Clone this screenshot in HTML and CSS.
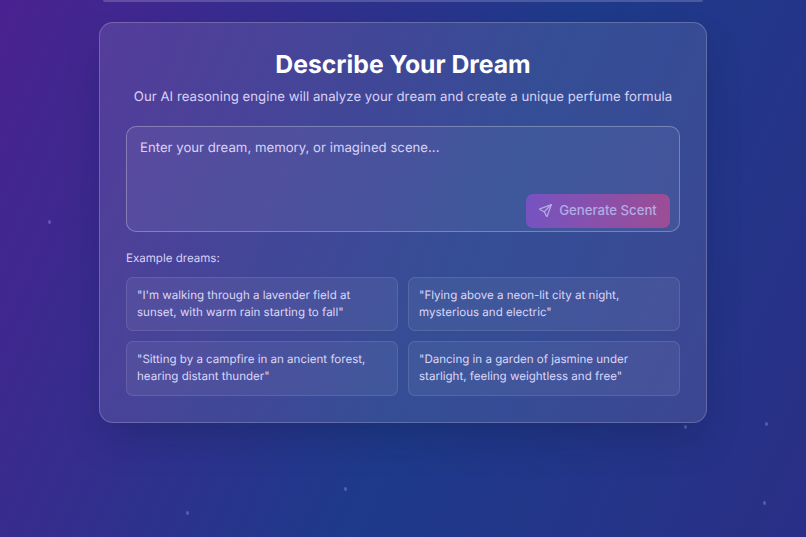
FILE: index.html
```html
<!DOCTYPE html>
<html lang="en">
<head>
<meta charset="utf-8">
<title>Describe Your Dream</title>
<link rel="stylesheet" href="styles.css">
</head>
<body>
<div class="stars">
  <span class="star s1"></span><span class="star s2"></span><span class="star s3"></span>
  <span class="star s4"></span><span class="star s5"></span><span class="star s6"></span>
</div>
<main class="page">
  <div class="prev-panel"></div>
  <section class="card">
    <h1 class="title">Describe Your Dream</h1>
    <p class="subtitle">Our AI reasoning engine will analyze your dream and create a unique perfume formula</p>
    <div class="input-box">
      <div class="placeholder">Enter your dream, memory, or imagined scene...</div>
      <div class="button-row">
        <button class="generate" type="button">
          <svg class="send" viewBox="0 0 24 24" fill="none" stroke="currentColor" stroke-width="2" stroke-linecap="round" stroke-linejoin="round"><path d="M21.5 2.5 14.6 21.1a.5.5 0 0 1-.93.03L10 14 2.9 10.3a.5.5 0 0 1 .03-.93Z"/><path d="M21.5 2.5 10 14"/></svg>
          <span>Generate Scent</span>
        </button>
      </div>
    </div>
    <p class="examples-label">Example dreams:</p>
    <div class="examples">
      <div class="example">"I'm walking through a lavender field at sunset, with warm rain starting to fall"</div>
      <div class="example">"Flying above a neon-lit city at night, mysterious and electric"</div>
      <div class="example">"Sitting by a campfire in an ancient forest, hearing distant thunder"</div>
      <div class="example">"Dancing in a garden of jasmine under starlight, feeling weightless and free"</div>
    </div>
  </section>
</main>
</body>
</html>
```
FILE: styles.css
```css
* { box-sizing: border-box; }
html, body { height: 100%; }
body {
  margin: 0;
  overflow: hidden;
  position: relative;
  font-family: Inter, "Liberation Sans", sans-serif;
  text-rendering: geometricPrecision;
  background: linear-gradient(114deg, #4a2291 0%, #1e3a8a 56%, #2a2f86 100%);
  color: #fff;
}
.stars { position: absolute; inset: 0; }
.star {
  position: absolute;
  width: 3px;
  height: 4px;
  border-radius: 50%;
  background: rgba(190, 200, 255, 0.3);
}
.s1 { left: 48px; top: 220px; }
.s2 { left: 684px; top: 425px; }
.s3 { left: 765px; top: 422px; }
.s4 { left: 344px; top: 487px; }
.s5 { left: 186px; top: 511px; }
.s6 { left: 763px; top: 501px; }
.page {
  position: relative;
  display: flex;
  flex-direction: column;
  align-items: center;
}
.prev-panel {
  width: 600px;
  height: 2px;
  border-radius: 0 0 4px 4px;
  background: rgba(255, 255, 255, 0.18);
}
.card {
  width: 608px;
  height: 401px;
  margin-top: 20px;
  padding: 26px;
  border-radius: 14px;
  border: 1px solid rgba(255, 255, 255, 0.2);
  background: rgba(255, 255, 255, 0.1);
  box-shadow: 0 20px 40px -8px rgba(10, 20, 60, 0.28);
}
.title {
  margin: 0;
  font-size: 24.75px;
  line-height: 30px;
  font-weight: 700;
  text-align: center;
}
.subtitle {
  margin: 8px 0 0;
  font-size: 13.2px;
  line-height: 20px;
  letter-spacing: 0.025px;
  text-align: center;
  color: #d8d2f6;
}
.input-box {
  margin-top: 19px;
  height: 106px;
  padding: 12px 9px 3px 13px;
  display: flex;
  flex-direction: column;
  justify-content: space-between;
  border-radius: 10px;
  border: 1px solid rgba(255, 255, 255, 0.28);
  background: rgba(255, 255, 255, 0.06);
}
.placeholder {
  font-size: 13.2px;
  line-height: 18px;
  color: #d9d2f7;
}
.button-row { display: flex; justify-content: flex-end; }
.generate {
  width: 144px;
  height: 34px;
  padding: 0 1px 2px 0;
  display: flex;
  align-items: center;
  justify-content: center;
  gap: 6px;
  border: 0;
  border-radius: 7px;
  font-family: inherit;
  font-size: 13.2px;
  font-weight: 500;
  color: #b3abe4;
  background: linear-gradient(90deg, #7653c1, #9c4d95);
}
.send { width: 15px; height: 15px; flex: none; }
.examples-label {
  margin: 17px 0 0;
  font-size: 11.55px;
  line-height: 18px;
  color: #d8d2f6;
}
.examples {
  margin-top: 10px;
  display: grid;
  grid-template-columns: 1fr 1fr;
  grid-template-rows: 54px 55px;
  gap: 10px;
}
.example {
  padding: 9px 10px;
  border-radius: 7px;
  border: 1px solid rgba(255, 255, 255, 0.1);
  background: rgba(255, 255, 255, 0.06);
  font-size: 11.55px;
  line-height: 17px;
  color: #dcd7f8;
}
```
